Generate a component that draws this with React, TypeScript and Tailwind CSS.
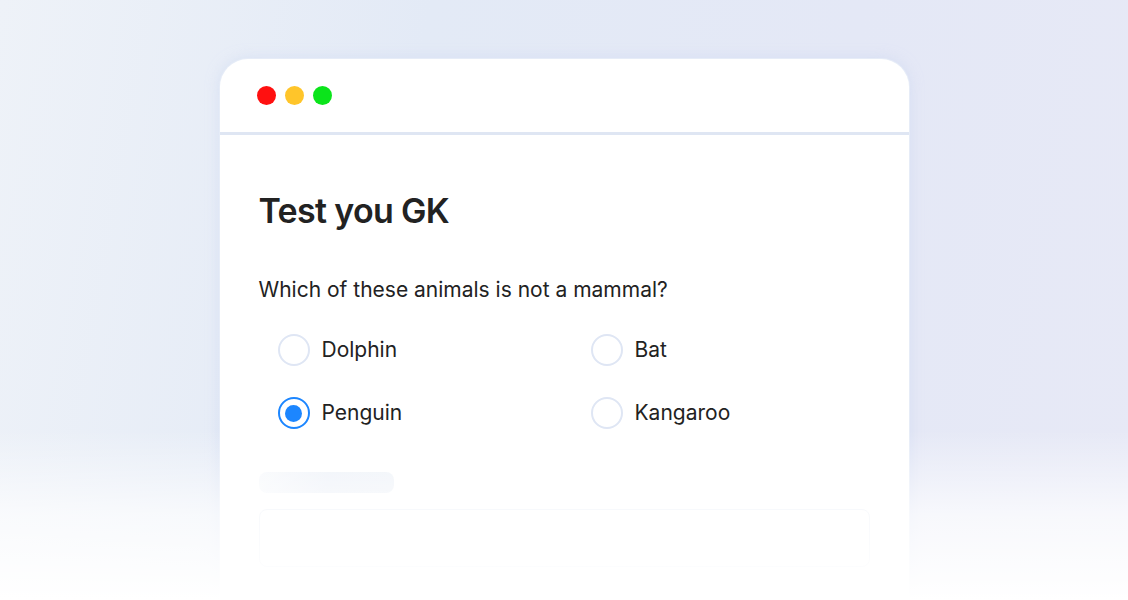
const OPTIONS = [
  { label: "Dolphin", checked: false },
  { label: "Bat", checked: false },
  { label: "Penguin", checked: true },
  { label: "Kangaroo", checked: false },
];

function Radio({ checked }: { checked: boolean }) {
  return checked ? (
    <span className="flex h-8 w-8 shrink-0 items-center justify-center rounded-full border-2 border-[#1c86ff] bg-white">
      <span className="h-[17px] w-[17px] rounded-full bg-[#1c86ff]" />
    </span>
  ) : (
    <span className="h-8 w-8 shrink-0 rounded-full border-2 border-[#dfe6f4] bg-white" />
  );
}

export default function App() {
  return (
    <div
      className="relative h-[600px] w-full overflow-hidden bg-[linear-gradient(100deg,#eef2f8_0%,#e3eaf6_35%,#e4e8f6_70%,#e7e9f6_100%)]"
      style={{ fontFamily: "Inter, 'Noto Sans', sans-serif" }}
    >
      <div className="mx-auto mt-[59px] w-[689px] rounded-t-[28px] bg-white shadow-[0_0_0_1px_#e6ecf7,0_0_14px_rgba(200,212,240,0.6)]">
        <div className="flex h-[73px] items-center gap-[9px] px-[37px]">
          <span className="h-[19px] w-[19px] rounded-full bg-[#ff1010]" />
          <span className="h-[19px] w-[19px] rounded-full bg-[#ffc52a]" />
          <span className="h-[19px] w-[19px] rounded-full bg-[#0be41b]" />
        </div>
        <div className="h-[3px] bg-[#dfe6f3]" />
        <div className="px-[39px] pb-10 pt-[54px]">
          <h1 className="text-[34px] font-semibold leading-[44px] tracking-[-0.02em] text-[#222]">Test you GK</h1>
          <p className="mt-[42px] text-[21px] leading-[30px] text-[#222]">
            Which of these animals is not a mammal?
          </p>
          <div className="mt-[29px] grid grid-cols-[313px_1fr] gap-y-[31px] pl-[19px]">
            {OPTIONS.map((o) => (
              <label key={o.label} className="flex items-center gap-3 text-[21px] leading-8 text-[#222]">
                <Radio checked={o.checked} />
                {o.label}
              </label>
            ))}
          </div>
          <div className="mt-[43px] h-[21px] w-[135px] rounded-lg bg-[linear-gradient(90deg,#f7f9fc_0%,#edf1f8_50%,#eef2f8_100%)]" />
          <div className="mt-4 h-[58px] w-[611px] rounded-lg border border-[#e8edf6]" />
        </div>
      </div>
      <div className="pointer-events-none absolute inset-x-0 bottom-0 h-[170px] bg-gradient-to-b from-white/0 via-white/70 to-white" />
    </div>
  );
}
